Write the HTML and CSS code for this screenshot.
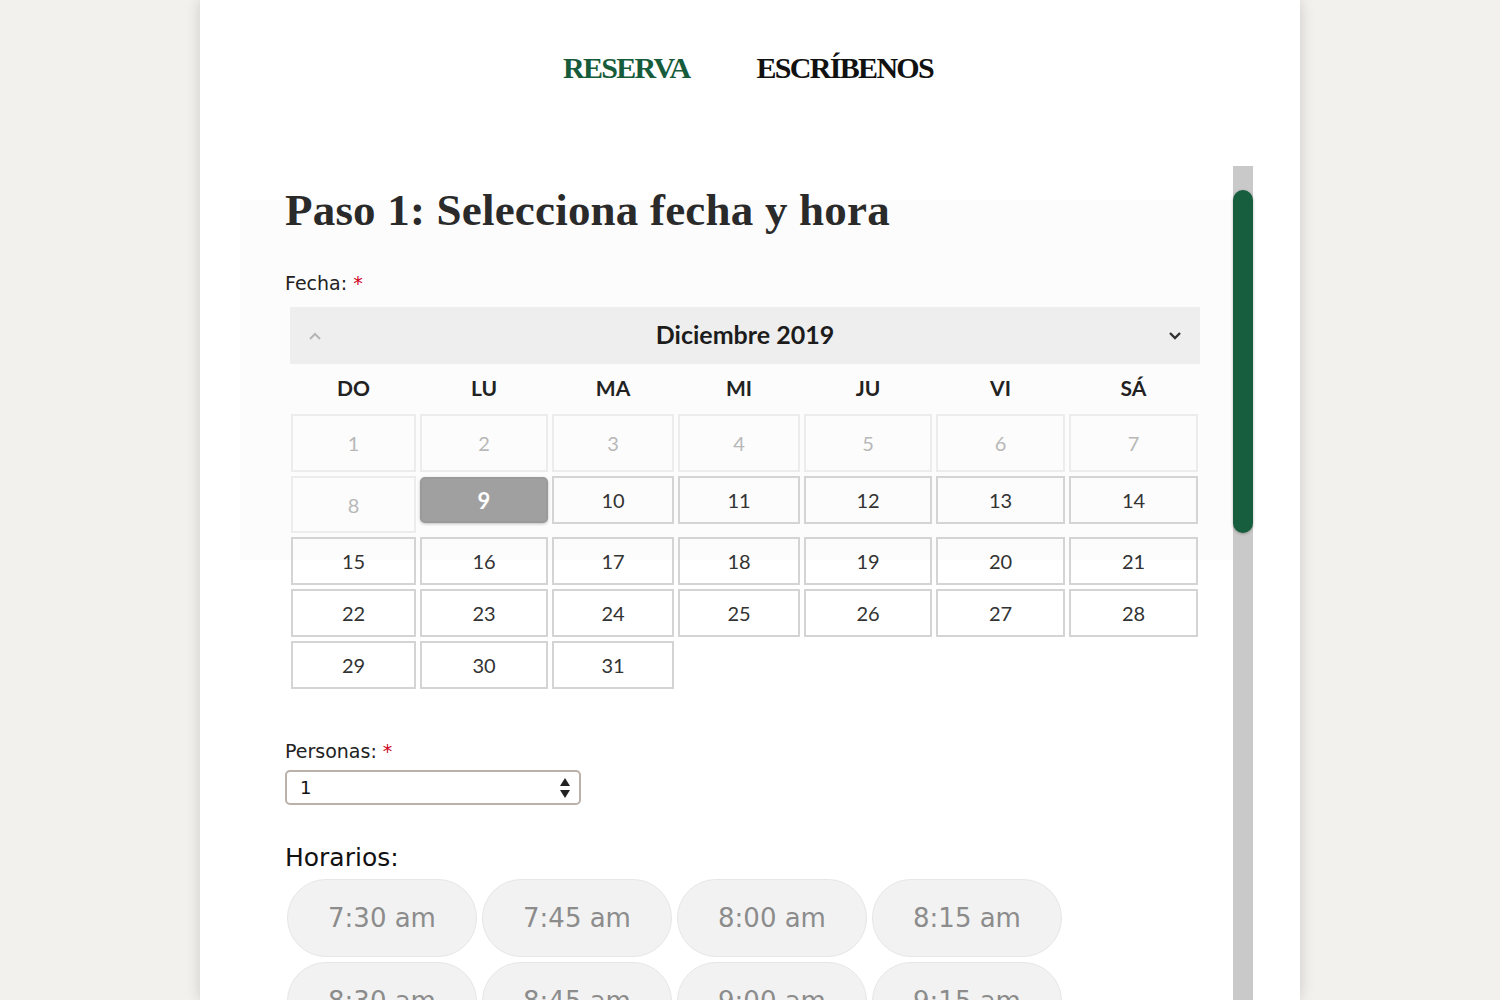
FILE: index.html
```html
<!DOCTYPE html>
<html lang="es">
<head>
<meta charset="utf-8">
<title>Reserva</title>
<link rel="stylesheet" href="styles.css">
</head>
<body>
<div class="card">
  <nav class="nav">
    <a class="nav-link active">RESERVA</a>
    <a class="nav-link">ESCRÍBENOS</a>
  </nav>
  <div class="scroller">
    <div class="content">
      <h1 class="title">Paso 1: Selecciona fecha y hora</h1>
      <label class="label">Fecha: <span class="req">*</span></label>
      <div class="calendar">
        <div class="cal-head">
          <svg class="caret up" width="14" height="10" viewBox="0 0 14 10"><polyline points="2,8 7,3 12,8" fill="none" stroke="#b5b5b5" stroke-width="2"/></svg>
          <span class="month">Diciembre 2019</span>
          <svg class="caret down" width="14" height="10" viewBox="0 0 14 10"><polyline points="2,2 7,7 12,2" fill="none" stroke="#333" stroke-width="2.4"/></svg>
        </div>
        <div class="grid">
          <div class="wd">DO</div><div class="wd">LU</div><div class="wd">MA</div><div class="wd">MI</div><div class="wd">JU</div><div class="wd">VI</div><div class="wd">SÁ</div>
          <div class="day off r1">1</div><div class="day off r1">2</div><div class="day off r1">3</div><div class="day off r1">4</div><div class="day off r1">5</div><div class="day off r1">6</div><div class="day off r1">7</div>
          <div class="day off r2">8</div><div class="day sel">9</div><div class="day">10</div><div class="day">11</div><div class="day">12</div><div class="day">13</div><div class="day">14</div>
          <div class="day">15</div><div class="day">16</div><div class="day">17</div><div class="day">18</div><div class="day">19</div><div class="day">20</div><div class="day">21</div>
          <div class="day">22</div><div class="day">23</div><div class="day">24</div><div class="day">25</div><div class="day">26</div><div class="day">27</div><div class="day">28</div>
          <div class="day">29</div><div class="day">30</div><div class="day">31</div>
        </div>
      </div>
      <label class="label personas">Personas: <span class="req">*</span></label>
      <div class="select">
        <span>1</span>
        <svg width="12" height="22" viewBox="0 0 12 22"><polygon points="6,1 11,9 1,9" fill="#222"/><polygon points="1,13 11,13 6,21" fill="#222"/></svg>
      </div>
      <h2 class="horarios">Horarios:</h2>
      <div class="slots">
        <div class="slot">7:30 am</div><div class="slot">7:45 am</div><div class="slot">8:00 am</div><div class="slot">8:15 am</div>
        <div class="slot">8:30 am</div><div class="slot">8:45 am</div><div class="slot">9:00 am</div><div class="slot">9:15 am</div>
      </div>
    </div>
    <div class="track"><div class="thumb"></div></div>
  </div>
</div>
</body>
</html>
```
FILE: styles.css
```css
html, body {
  margin: 0;
  padding: 0;
  height: 1000px;
  overflow: hidden;
  background: #f3f1ee;
}
.card {
  width: 1100px;
  height: 1000px;
  margin: 0 auto;
  background: #ffffff;
  box-shadow: 0 0 14px rgba(0,0,0,0.16);
  overflow: hidden;
}
.nav {
  display: flex;
  justify-content: center;
  gap: 67px;
  padding-top: 48px;
  padding-right: 4px;
  height: 118px;
  box-sizing: border-box;
}
.nav-link {
  font-family: "Liberation Serif", serif;
  font-weight: bold;
  font-size: 30px;
  line-height: 40px;
  letter-spacing: -1.7px;
  color: #111;
}
.nav-link.active { color: #175c3a; }
.scroller {
  display: flex;
  margin: 48px 47px 0 40px;
  height: 834px;
}
.content {
  flex: 1;
  padding-left: 45px;
  padding-right: 33px;
  background: linear-gradient(#fcfcfc, #fcfcfc) no-repeat 0 34px / 100% 360px;
}
.title {
  margin: 20px 0 0;
  font-family: "Liberation Serif", serif;
  font-weight: bold;
  font-size: 45px;
  line-height: 48px;
  letter-spacing: 0.2px;
  color: #2a2a2a;
}
.label {
  display: block;
  font-family: "DejaVu Sans", Verdana, sans-serif;
  font-size: 19px;
  line-height: 24px;
  color: #222;
  margin-top: 37px;
}
.req { color: #d0021b; }
.calendar {
  margin: 12px 0 0 5px;
  width: 910px;
  font-family: "Lato", "Open Sans", sans-serif;
}
.cal-head {
  height: 57px;
  background: #eeeeee;
  display: flex;
  align-items: center;
  justify-content: space-between;
  padding: 0 18px;
  box-sizing: border-box;
}
.month {
  font-weight: bold;
  font-size: 25px;
  line-height: 30px;
  margin-top: -3px;
  color: #1c1c1c;
}
.grid {
  display: grid;
  grid-template-columns: 125px 128px 122px 122px 128px 129px 129px;
  column-gap: 4px;
  row-gap: 4px;
  align-items: start;
  margin-left: 1px;
}
.wd {
  height: 46px;
  line-height: 48px;
  text-align: center;
  font-weight: bold;
  font-size: 21px;
  color: #222;
}
.day {
  height: 48px;
  box-sizing: border-box;
  border: 2px solid #d4d4d4;
  display: flex;
  align-items: center;
  justify-content: center;
  font-size: 20px;
  color: #333;
}
.day.off {
  border-color: #ececec;
  color: #b8b8b8;
}
.day.r1 { height: 58px; }
.day.r2 { height: 57px; }
.day.sel {
  height: 46px;
  margin-top: 1px;
  background: #a0a0a0;
  border-color: #9a9a9a;
  border-radius: 5px;
  color: #fff;
  font-weight: bold;
  font-size: 22px;
  box-shadow: 0 1px 3px rgba(0,0,0,0.25);
}
.label.personas { margin-top: 50px; }
.select {
  margin-top: 7px;
  width: 296px;
  height: 35px;
  box-sizing: border-box;
  border: 2px solid #bab1aa;
  border-radius: 5px;
  display: flex;
  align-items: center;
  justify-content: space-between;
  padding: 0 8px 0 13px;
  font-family: "DejaVu Sans", Verdana, sans-serif;
  font-size: 18px;
  color: #111;
}
.horarios {
  margin: 38px 0 0;
  font-family: "DejaVu Sans", Verdana, sans-serif;
  font-weight: normal;
  font-size: 25px;
  line-height: 30px;
  color: #111;
}
.slots {
  display: grid;
  grid-template-columns: repeat(4, 190px);
  column-gap: 5px;
  row-gap: 5px;
  margin-top: 6px;
  margin-left: 2px;
}
.slot {
  height: 78px;
  box-sizing: border-box;
  border: 1px solid #e6e6e6;
  border-radius: 40px;
  background: #f2f2f2;
  display: flex;
  align-items: center;
  justify-content: center;
  font-family: "DejaVu Sans", Verdana, sans-serif;
  font-size: 26px;
  color: #8c8c8c;
}
.track {
  width: 20px;
  background: #c9c9c9;
  position: relative;
}
.thumb {
  position: absolute;
  left: 0;
  top: 24px;
  width: 20px;
  height: 343px;
  border-radius: 10px;
  background: #165e3d;
  box-shadow: 0 1px 3px rgba(0,0,0,0.3);
}
```
